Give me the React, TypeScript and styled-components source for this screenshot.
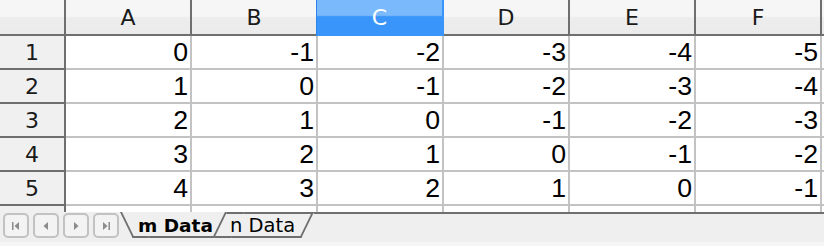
import { Fragment } from "react";
import styled, { createGlobalStyle, css } from "styled-components";

const GlobalStyle = createGlobalStyle`
  html, body {
    margin: 0;
    padding: 0;
    background: #ffffff;
  }
  * {
    box-sizing: border-box;
  }
`;

// G only peeks in at the right edge, so its header stays empty
const COLUMNS = ["A", "B", "C", "D", "E", "F", ""];
const ROWS = [1, 2, 3, 4, 5, 6];
const SELECTED = "C";

const Window = styled.div`
  width: 824px;
  height: 246px;
  display: flex;
  flex-direction: column;
  overflow: hidden;
  background: #ffffff;
`;

const Sheet = styled.div`
  height: 212px;
  overflow: hidden;
  display: grid;
  grid-template-columns: 66px repeat(7, 126px);
  grid-template-rows: 36px repeat(6, 34px);
`;

const HeaderCell = styled.div<{ $selected?: boolean }>`
  position: relative;
  display: flex;
  align-items: center;
  justify-content: center;
  border-right: 2px solid #6f6f6f;
  border-bottom: 2px solid #6f6f6f;
  background: linear-gradient(#f6f6f6 0, #f6f6f6 48%, #ededed 52%, #ebebeb 100%);
  font-family: "DejaVu Sans", sans-serif;
  font-size: 22px;
  color: #1a1a1a;
  ${(p) =>
    p.$selected &&
    css`
      margin-left: -2px;
      z-index: 1;
      color: #ffffff;
      border-left: 1px solid #2d84e6;
      border-right-color: #3a95fa;
      border-bottom-color: #3a95fa;
      background: linear-gradient(#7ab9fc 0, #7ab9fc 45%, #3a95fa 49%, #3a95fa 100%);
    `}
`;

const RowHeader = styled.div`
  display: flex;
  align-items: center;
  justify-content: center;
  border-right: 2px solid #6f6f6f;
  border-bottom: 2px solid #6f6f6f;
  background: #f0f0f0;
  font-family: "DejaVu Sans", sans-serif;
  font-size: 22px;
  color: #1a1a1a;
`;

const Cell = styled.div`
  display: flex;
  align-items: center;
  justify-content: flex-end;
  padding-right: 2px;
  border-right: 2px solid #c3c3c3;
  border-bottom: 2px solid #c3c3c3;
  font-family: "Liberation Sans", Arial, sans-serif;
  font-size: 26.7px;
  color: #000000;
`;

const TabBar = styled.div`
  flex: 1;
  display: flex;
  align-items: flex-start;
  background: #efefef;
  border-bottom: 4px solid #f6f6f6;
`;

const NavGroup = styled.div`
  display: flex;
  gap: 4px;
  padding: 1px 0 0 3px;
  width: 120px;
`;

const NavButton = styled.div`
  width: 26px;
  height: 25px;
  display: flex;
  align-items: center;
  justify-content: center;
  border: 2px solid #c2c2c2;
  border-radius: 5px;
  background: #f3f3f3;
`;

const Tab = styled.div<{ $active?: boolean; $padLeft: number; $width: number }>`
  position: relative;
  isolation: isolate;
  height: 26px;
  width: ${(p) => p.$width}px;
  padding-left: ${(p) => p.$padLeft}px;
  display: flex;
  align-items: center;
  font-family: "DejaVu Sans", sans-serif;
  font-size: ${(p) => (p.$active ? 18.5 : 19.5)}px;
  color: #000000;
  font-weight: ${(p) => (p.$active ? 700 : 400)};
  z-index: ${(p) => (p.$active ? 2 : 1)};
  &::before,
  &::after {
    content: "";
    position: absolute;
    top: 0;
    bottom: 0;
    width: 60%;
    z-index: -1;
    background: #efefef;
    border-bottom: 2px solid #6f6f6f;
    border-top: ${(p) => (p.$active ? "none" : "2px solid #6f6f6f")};
  }
  &::before {
    left: 0;
    border-left: 2px solid #6f6f6f;
    transform-origin: top left;
    transform: skewX(26deg);
  }
  &::after {
    right: 0;
    border-right: 2px solid #6f6f6f;
    transform-origin: top right;
    transform: skewX(-26deg);
  }
  & + & {
    margin-left: -26px;
  }
`;

const Filler = styled.div`
  flex: 1;
  height: 2px;
  background: #6f6f6f;
`;

const NavIcon = ({ kind }: { kind: "first" | "prev" | "next" | "last" }) => (
  <svg width="12" height="10" viewBox="0 0 12 10">
    {kind === "first" && (
      <>
        <rect x="2" y="1" width="1.5" height="8" fill="#8c8c8c" />
        <path d="M9 1 L4.5 5 L9 9 Z" fill="#8c8c8c" />
      </>
    )}
    {kind === "prev" && <path d="M8 1 L3.5 5 L8 9 Z" fill="#8c8c8c" />}
    {kind === "next" && <path d="M4 1 L8.5 5 L4 9 Z" fill="#8c8c8c" />}
    {kind === "last" && (
      <>
        <path d="M3 1 L7.5 5 L3 9 Z" fill="#8c8c8c" />
        <rect x="8.5" y="1" width="1.5" height="8" fill="#8c8c8c" />
      </>
    )}
  </svg>
);

const App = () => {
  return (
    <Window>
      <GlobalStyle />
      <Sheet>
        <HeaderCell />
        {COLUMNS.map((c, ci) => (
          <HeaderCell key={`col${ci}`} $selected={c === SELECTED}>
            {c}
          </HeaderCell>
        ))}
        {ROWS.map((r) => (
          <Fragment key={r}>
            <RowHeader>{r <= 5 ? r : ""}</RowHeader>
            {COLUMNS.map((_, ci) => (
              <Cell key={ci}>{r <= 5 && ci < 6 ? r - 1 - ci : ""}</Cell>
            ))}
          </Fragment>
        ))}
      </Sheet>
      <TabBar>
        <NavGroup>
          <NavButton>
            <NavIcon kind="first" />
          </NavButton>
          <NavButton>
            <NavIcon kind="prev" />
          </NavButton>
          <NavButton>
            <NavIcon kind="next" />
          </NavButton>
          <NavButton>
            <NavIcon kind="last" />
          </NavButton>
        </NavGroup>
        <Tab $active $width={107} $padLeft={18}>
          m Data
        </Tab>
        <Tab $width={113} $padLeft={29}>
          n Data
        </Tab>
        <Filler />
      </TabBar>
    </Window>
  );
};

export default App;
